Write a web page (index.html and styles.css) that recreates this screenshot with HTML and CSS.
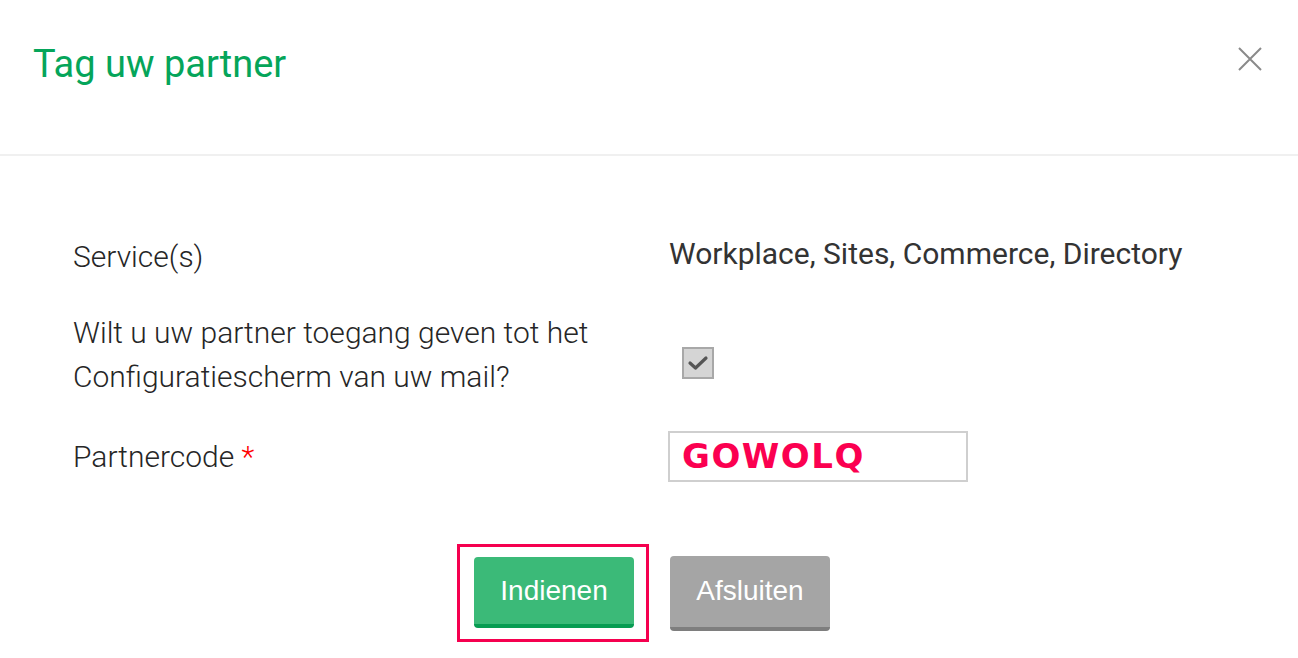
FILE: index.html
```html
<!DOCTYPE html>
<html>
  <head>
    <meta charset="utf-8">
    <title>Tag uw partner</title>
    <link rel="stylesheet" href="styles.css">
  </head>
  <body>
    <div class="modal">
      <div class="modal-header">
        <h2 class="modal-title">Tag uw partner</h2>
        <button class="close" aria-label="Sluiten">
          <svg width="24" height="24" viewBox="0 0 24 24">
            <path d="M1 1 L23 23 M23 1 L1 23" stroke="#8a8a8a" stroke-width="2" fill="none"/>
          </svg>
        </button>
      </div>

      <div class="modal-body">
        <div class="form-row">
          <div class="label">Service(s)</div>
          <div class="value">Workplace, Sites, Commerce, Directory</div>
        </div>

        <div class="form-row">
          <div class="label">Wilt u uw partner toegang geven tot het Configuratiescherm van uw mail?</div>
          <div class="value">
            <span class="checkbox">
              <svg width="22" height="18" viewBox="0 0 22 18">
                <path d="M3 9 L8.5 14 L19 4" stroke="#555" stroke-width="3.2" fill="none" stroke-linecap="round" stroke-linejoin="round"/>
              </svg>
            </span>
          </div>
        </div>

        <div class="form-row row-center">
          <div class="label">Partnercode <span class="required">*</span></div>
          <div class="value">
            <div class="code-input">GOWOLQ</div>
          </div>
        </div>

        <div class="actions">
          <div class="highlight">
            <button class="btn btn-submit">Indienen</button>
          </div>
          <button class="btn btn-close">Afsluiten</button>
        </div>
      </div>
    </div>
  </body>
</html>
```

FILE: styles.css
```css
body {
  margin: 0;
  padding: 0;
  background-color: #fff;
  font-family: Roboto, "Liberation Sans", Arial, sans-serif;
  color: #333;
}

.modal {
  width: 100%;
}

.modal-header {
  height: 156px;
  border-bottom: 2px solid #f0f0f0;
  display: flex;
  justify-content: space-between;
  align-items: flex-start;
  padding: 0 36px 0 33px;
  box-sizing: border-box;
}

.modal-title {
  margin: 38px 0 0 0;
  font-size: 38px;
  font-weight: 400;
  color: #05a55a;
  line-height: 52px;
}

.close {
  background: none;
  border: none;
  padding: 0;
  margin-top: 47px;
  cursor: pointer;
  line-height: 0;
}

.modal-body {
  padding: 79px 0 0 73px;
}

.form-row {
  display: grid;
  grid-template-columns: 596px 1fr;
  margin-bottom: 32px;
}

.row-center {
  align-items: center;
}

.label {
  font-size: 30px;
  font-weight: 300;
  line-height: 44px;
  color: #262626;
  max-width: 560px;
}

.value {
  font-size: 30px;
  font-weight: 400;
  line-height: 44px;
  color: #333;
  margin-top: -3px;
}

.required {
  color: #f00;
}

.checkbox {
  display: flex;
  align-items: center;
  justify-content: center;
  width: 28px;
  height: 28px;
  margin: 39px 0 0 13px;
  background-color: #d5d5d5;
  border: 2px solid #a8a8a8;
}

.code-input {
  box-sizing: border-box;
  width: 300px;
  height: 51px;
  margin: 3px 0 0 -1px;
  padding-left: 12px;
  border: 2px solid #cfcfcf;
  font-family: "DejaVu Sans", sans-serif;
  font-weight: bold;
  font-size: 34px;
  letter-spacing: 1.5px;
  line-height: 47px;
  color: #fb0050;
}

.actions {
  display: flex;
  justify-content: center;
  align-items: center;
  gap: 21px;
  padding-top: 30px;
  margin-left: -73px;
  padding-right: 11px;
}

.highlight {
  display: flex;
  border: 3px solid #f5004f;
  padding: 10px 12px 11px 14px;
}

.btn {
  font-family: "Liberation Sans", Arial, sans-serif;
  font-size: 28px;
  color: #fff;
  width: 160px;
  border: none;
  border-radius: 4px;
  cursor: pointer;
}

.btn-submit {
  height: 71px;
  background-color: #3bba78;
  border-bottom: 4px solid #079c52;
}

.btn-close {
  height: 75px;
  background-color: #a5a5a5;
  border-bottom: 4px solid #7e7e7e;
}
```
